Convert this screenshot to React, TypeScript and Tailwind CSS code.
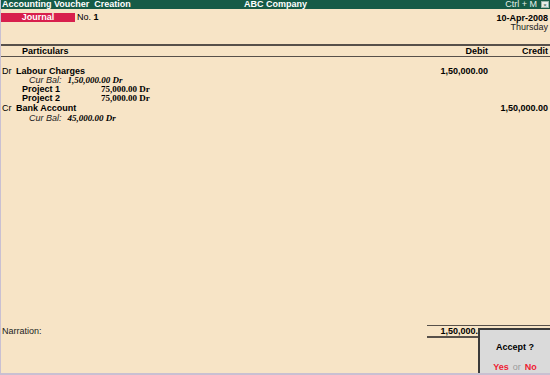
import React from "react";

const sans = { fontFamily: '"Liberation Sans", Arial, sans-serif' };

function Row({
  children,
  debit,
  credit,
  className = "",
}: {
  children: React.ReactNode;
  debit?: string;
  credit?: string;
  className?: string;
}) {
  return (
    <div className={`flex h-[9px] items-center leading-[9px] ${className}`}>
      <div className="flex flex-1 items-center">{children}</div>
      <div className="w-[60px] text-right font-bold">{debit}</div>
      <div className="w-[62px] pr-[2px] text-right font-bold">{credit}</div>
    </div>
  );
}

export default function App() {
  return (
    <div
      className="relative flex h-[375px] w-[550px] flex-col overflow-hidden border-b-2 border-l border-[#c9c0d2] bg-[#f7e4c6] text-[9px] text-black"
      style={sans}
    >
      {/* title bar */}
      <div className="grid h-[9px] grid-cols-3 items-center bg-[#165b47] text-[9px] leading-[9px] text-white">
        <span className="pl-[1px] font-bold">Accounting Voucher&nbsp; Creation</span>
        <span className="text-center font-bold">ABC Company</span>
        <span className="flex items-center justify-end gap-[4px]">
          <span className="text-[#e6efe9]">Ctrl + M</span>
          <span className="mr-[1px] grid h-[7px] w-[8px] place-items-center border border-[#9bb5ab] bg-[#e6ece9] text-[6px] leading-none text-[#165b47]">
            ×
          </span>
        </span>
      </div>

      {/* voucher header */}
      <div className="flex h-[35px] justify-between pt-[4px]">
        <div className="flex h-[9px] items-center gap-[2px]">
          <div className="flex h-[9px] w-[74px] items-center justify-center bg-[#d81f4d] font-bold leading-[9px] text-white">
            Journal
          </div>
          <span>
            No. <b>1</b>
          </span>
        </div>
        <div className="pr-[2px] pt-[1px] text-right leading-[9px]">
          <div className="font-bold">10-Apr-2008</div>
          <div className="text-[#222]">Thursday</div>
        </div>
      </div>

      {/* column header */}
      <div className="border-b border-t-2 border-[#57504a] pt-[1px]">
        <Row debit="Debit" credit="Credit">
          <span className="pl-[21px] font-bold">Particulars</span>
        </Row>
      </div>

      {/* entries */}
      <div className="pt-[10px]">
        <Row debit="1,50,000.00">
          <span className="w-[15px] pl-[1px]">Dr</span>
          <span className="font-bold">Labour Charges</span>
        </Row>
        <Row>
          <span className="pl-[28px] italic text-[#222]">Cur Bal:</span>
          <span className="pl-[6px] font-bold italic" style={{ fontFamily: '"Liberation Serif", serif' }}>
            1,50,000.00 Dr
          </span>
        </Row>
        <Row>
          <span className="w-[100px] pl-[21px] font-bold">Project 1</span>
          <span className="font-bold" style={{ fontFamily: '"Liberation Serif", serif' }}>
            75,000.00 Dr
          </span>
        </Row>
        <Row>
          <span className="w-[100px] pl-[21px] font-bold">Project 2</span>
          <span className="font-bold" style={{ fontFamily: '"Liberation Serif", serif' }}>
            75,000.00 Dr
          </span>
        </Row>
        <Row credit="1,50,000.00" className="mt-[1px]">
          <span className="w-[15px] pl-[1px]">Cr</span>
          <span className="font-bold">Bank Account</span>
        </Row>
        <Row className="mt-[1px]">
          <span className="pl-[28px] italic text-[#222]">Cur Bal:</span>
          <span className="pl-[6px] font-bold italic" style={{ fontFamily: '"Liberation Serif", serif' }}>
            45,000.00 Dr
          </span>
        </Row>
      </div>

      <div className="flex-1" />

      {/* footer */}
      <div className="flex h-[48px] items-start justify-between">
        <span className="pl-[1px] pt-[2px] leading-[9px] text-[#222]">Narration:</span>
        <div className="flex w-[123px] border-b-2 border-t border-[#57504a] pt-[1px] font-bold leading-[9px]">
          <span className="w-[61px] text-right">1,50,000.00</span>
          <span className="w-[62px] pr-[2px] text-right">1,50,000.00</span>
        </div>
      </div>

      {/* accept dialog */}
      <div className="absolute bottom-0 right-0 flex h-[45px] w-[72px] flex-col items-center border-l-2 border-t-2 border-[#3a3a3a] bg-[#dadada]">
        <div className="pt-[13px] font-bold leading-[9px]">Accept ?</div>
        <div className="flex-1" />
        <div className="flex items-center gap-[4px] pb-[1px] font-bold leading-[9px]">
          <span className="text-[#ee2233]">Yes</span>
          <span className="font-normal text-[#9a9a9a]">or</span>
          <span className="text-[#ee2233]">No</span>
        </div>
      </div>
    </div>
  );
}
